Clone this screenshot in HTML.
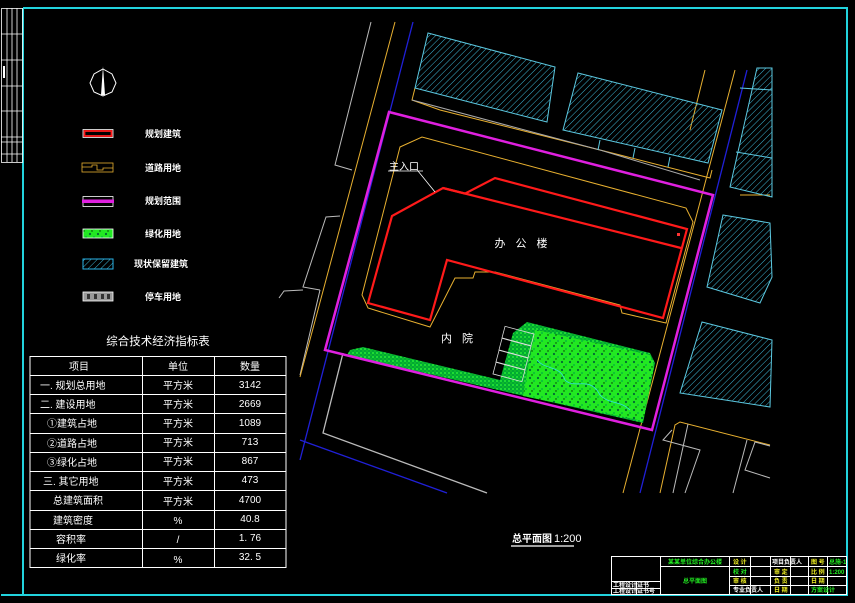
<!DOCTYPE html>
<html><head><meta charset="utf-8">
<style>
html,body{margin:0;padding:0;background:#000;}
svg{display:block;}
text{font-family:"Liberation Sans","Noto Sans CJK SC",sans-serif;}
</style></head>
<body>
<svg width="855" height="603" viewBox="0 0 855 603" xmlns="http://www.w3.org/2000/svg">
<defs>
<pattern id="hatch" width="4.5" height="4.5" patternUnits="userSpaceOnUse" patternTransform="rotate(45)">
<line x1="0" y1="0" x2="0" y2="4.5" stroke="#3cb4d2" stroke-width="1"/>
</pattern>
<pattern id="green" width="8" height="8" patternUnits="userSpaceOnUse">
<rect width="8" height="8" fill="#22e822"/>
<circle cx="2" cy="2" r="1.1" fill="#063"/>
<circle cx="6" cy="5" r="0.9" fill="#0a4"/>
<circle cx="4" cy="7" r="0.7" fill="#030"/>
</pattern>
<pattern id="green2" width="4" height="4" patternUnits="userSpaceOnUse">
<rect width="4" height="4" fill="#0a3"/>
<circle cx="1" cy="1" r="0.9" fill="#3f3"/>
<circle cx="3" cy="3" r="0.7" fill="#2c2"/>
</pattern>
</defs>
<rect width="855" height="603" fill="#000"/>

<polyline points="23,8 847,8 847,595 1,595" fill="none" stroke="#22d3dd" stroke-width="2"/>
<line x1="23" y1="8" x2="23" y2="595" stroke="#22d3dd" stroke-width="2"/>
<g stroke="#fff" stroke-width="0.8" fill="none">
<rect x="1.5" y="8.5" width="21" height="154"/>
<line x1="7" y1="8" x2="7" y2="162"/><line x1="12" y1="8" x2="12" y2="162"/><line x1="17" y1="8" x2="17" y2="162"/>
<line x1="1" y1="34" x2="22" y2="34"/><line x1="1" y1="60" x2="22" y2="60"/><line x1="1" y1="86" x2="22" y2="86"/>
<line x1="1" y1="111" x2="22" y2="111"/><line x1="1" y1="137" x2="22" y2="137"/><line x1="1" y1="142" x2="22" y2="142"/><line x1="1" y1="154" x2="22" y2="154"/>
</g>
<rect x="3" y="66" width="2" height="12" fill="#fff"/>

<polygon points="103,69 112,74 116,83 112,92 103,96 94,92 90,83 94,74" fill="none" stroke="#fff" stroke-width="1"/>
<polygon points="103,66 105,95 101,95" fill="#fff"/>

<rect x="83" y="129.5" width="30" height="8" fill="none" stroke="#fff" stroke-width="0.8"/>
<rect x="84.5" y="131" width="27" height="5" fill="#000" stroke="#ff1a1a" stroke-width="1.8"/>
<text x="145" y="137" fill="#fff" font-size="9" font-weight="bold">规划建筑</text>

<rect x="82" y="163" width="31" height="9" fill="none" stroke="#e8b030" stroke-width="0.8"/>
<path d="M82,167 H92 V165 H97 V170 H103 V168 H113" fill="none" stroke="#e8b030" stroke-width="0.8"/>
<text x="145" y="171" fill="#fff" font-size="9" font-weight="bold">道路用地</text>

<rect x="83" y="196.5" width="30" height="10" fill="none" stroke="#fff" stroke-width="0.8"/>
<rect x="82" y="199.5" width="32" height="3.5" fill="#e020e0"/>
<text x="145" y="204" fill="#fff" font-size="9" font-weight="bold">规划范围</text>

<rect x="83" y="229" width="30" height="9" fill="url(#green)" stroke="#fff" stroke-width="0.8"/>
<text x="145" y="237" fill="#fff" font-size="9" font-weight="bold">绿化用地</text>

<rect x="83" y="259" width="30" height="10" fill="url(#hatch)" stroke="#2ab4e8" stroke-width="1"/>
<text x="134" y="267" fill="#fff" font-size="9" font-weight="bold">现状保留建筑</text>

<rect x="83" y="292" width="30" height="9" fill="#999" stroke="#fff" stroke-width="0.8"/>
<g fill="#333"><rect x="87" y="294" width="3" height="5"/><rect x="94" y="294" width="3" height="5"/><rect x="101" y="294" width="3" height="5"/><rect x="107" y="294" width="3" height="5"/></g>
<text x="145" y="300" fill="#fff" font-size="9" font-weight="bold">停车用地</text>

<text x="158" y="345" fill="#fff" font-size="11.5" text-anchor="middle">综合技术经济指标表</text>
<g stroke="#fff" stroke-width="1" fill="none">
<rect x="30" y="356.5" width="256" height="211"/>
<line x1="142.5" y1="356" x2="142.5" y2="567"/>
<line x1="214.5" y1="356" x2="214.5" y2="567"/>
<line x1="30" y1="375.5" x2="286" y2="375.5"/>
<line x1="30" y1="394.5" x2="286" y2="394.5"/>
<line x1="30" y1="413.5" x2="286" y2="413.5"/>
<line x1="30" y1="433.5" x2="286" y2="433.5"/>
<line x1="30" y1="452.5" x2="286" y2="452.5"/>
<line x1="30" y1="471.5" x2="286" y2="471.5"/>
<line x1="30" y1="490.5" x2="286" y2="490.5"/>
<line x1="30" y1="510.5" x2="286" y2="510.5"/>
<line x1="30" y1="529.5" x2="286" y2="529.5"/>
<line x1="30" y1="548.5" x2="286" y2="548.5"/>
</g>
<g fill="#fff" font-size="10">
<text x="79" y="370" text-anchor="middle">项目</text><text x="178" y="370" text-anchor="middle">单位</text><text x="250" y="370" text-anchor="middle">数量</text>
<text x="40" y="389">一. 规划总用地</text><text x="178" y="389" text-anchor="middle">平方米</text><text x="250" y="388" text-anchor="middle">3142</text>
<text x="40" y="408">二. 建设用地</text><text x="178" y="408" text-anchor="middle">平方米</text><text x="250" y="407" text-anchor="middle">2669</text>
<text x="47" y="427">①建筑占地</text><text x="178" y="427" text-anchor="middle">平方米</text><text x="250" y="426" text-anchor="middle">1089</text>
<text x="47" y="447">②道路占地</text><text x="178" y="446" text-anchor="middle">平方米</text><text x="250" y="445" text-anchor="middle">713</text>
<text x="47" y="466">③绿化占地</text><text x="178" y="465" text-anchor="middle">平方米</text><text x="250" y="464" text-anchor="middle">867</text>
<text x="43" y="485">三. 其它用地</text><text x="178" y="485" text-anchor="middle">平方米</text><text x="250" y="483" text-anchor="middle">473</text>
<text x="53" y="504">总建筑面积</text><text x="178" y="505" text-anchor="middle">平方米</text><text x="250" y="503" text-anchor="middle">4700</text>
<text x="53" y="524">建筑密度</text><text x="178" y="524" text-anchor="middle">%</text><text x="250" y="522" text-anchor="middle">40.8</text>
<text x="56" y="543">容积率</text><text x="178" y="543" text-anchor="middle">/</text><text x="250" y="541" text-anchor="middle">1. 76</text>
<text x="56" y="562">绿化率</text><text x="178" y="563" text-anchor="middle">%</text><text x="250" y="560" text-anchor="middle">32. 5</text>
</g>

<g fill="none" stroke-width="1">
<polyline points="371,22 335,165 352,170" stroke="#bbb"/>
<polyline points="340,216 326,217 303,287 320,290" stroke="#bbb"/>
<polyline points="303,290 284,291 279,298" stroke="#bbb"/>
<polyline points="320,290 300,375" stroke="#bbb"/>
<polyline points="343,353 323,433 487,493" stroke="#bbb" stroke-width="1.3"/>
<line x1="395" y1="22" x2="300" y2="377" stroke="#e8b030"/>
<line x1="735" y1="70" x2="623" y2="493" stroke="#e8b030"/>
<line x1="705" y1="70" x2="690" y2="130" stroke="#e8b030"/>
<polyline points="660,493 675,425 680,422 770,445" stroke="#e8b030"/>
<polyline points="740,195 770,195" stroke="#e8b030"/>
<line x1="413" y1="22" x2="300" y2="460" stroke="#2020d8" stroke-width="1.3"/>
<line x1="300" y1="440" x2="447" y2="493" stroke="#2020d8" stroke-width="1.3"/>
<line x1="747" y1="70" x2="640" y2="493" stroke="#2020d8" stroke-width="1.3"/>
<polyline points="688,424 673,493" stroke="#bbb"/>
<polyline points="672,430 663,440 700,450 685,493" stroke="#bbb"/>
<polyline points="747,440 733,493" stroke="#bbb"/>
<polyline points="770,446 755,442 745,470 770,478" stroke="#bbb"/>
<polyline points="415,88 412,100 440,110 620,155 710,178 712,170" stroke="#e8b030"/>
<polyline points="412,100 600,150 700,180" stroke="#aaa"/>
</g>

<g fill="url(#hatch)" stroke="#5cc8e0" stroke-width="1">
<polygon points="428,33 555,67 547,122 415,88"/>
<polygon points="578,73 722,110 708,163 563,130"/>
<polygon points="757,68 772,68 772,197 730,187"/>
<polygon points="723,215 770,223 772,277 760,303 707,287"/>
<polygon points="702,322 772,340 770,407 680,393"/>
</g>
<g stroke="#5cc8e0" stroke-width="1" fill="none">
<line x1="740" y1="88" x2="772" y2="90"/><line x1="736" y1="152" x2="772" y2="158"/>
<line x1="600" y1="140" x2="598" y2="150"/><line x1="635" y1="148" x2="633" y2="158"/><line x1="670" y1="157" x2="668" y2="167"/>
</g>

<path d="M400,147 L422,137 L686,208 L693,222 L666,323 L622,313 L620,305 L495,272 L475,272 L473,278 L455,278 L430,327 L368,308 L362,295 Z" fill="none" stroke="#e8b030" stroke-width="1"/>

<polygon points="350,350 363,347 500,380 513,333 527,322 650,353 655,363 643,423 520,395 347,355" fill="url(#green2)"/>
<polygon points="527,328 650,355 654,365 643,421 523,396 535,330" fill="url(#green)"/>
<g fill="none" stroke="#ddd" stroke-width="0.8">
<rect x="503" y="330" width="30" height="12" transform="rotate(15 518 336)"/>
<rect x="500" y="342" width="30" height="12" transform="rotate(15 515 348)"/>
<rect x="497" y="354" width="30" height="12" transform="rotate(15 512 360)"/>
<rect x="494" y="366" width="30" height="12" transform="rotate(15 509 372)"/>
</g>
<path d="M537,360 C545,370 560,365 565,380 C575,390 590,375 600,395 C610,405 620,400 630,410" fill="none" stroke="#30e0e0" stroke-width="0.8"/>

<polygon points="389,112 713,195 652,430 325,350" fill="none" stroke="#e020e0" stroke-width="2.5"/>

<g fill="none" stroke="#ff1a1a" stroke-width="2.2" stroke-linejoin="miter">
<polygon points="368,303 392,216 443,188 465,193.6 495,178 687,229 663,318 447,260 430,320"/>
<line x1="443" y1="188" x2="681" y2="248"/>
</g>
<rect x="677" y="233" width="3" height="3" fill="#f33"/>

<text x="526" y="247" fill="#fff" font-size="11" text-anchor="middle" letter-spacing="10">办公楼</text>
<text x="462" y="342" fill="#fff" font-size="11" text-anchor="middle" letter-spacing="10">内院</text>
<text x="389" y="170" fill="#fff" font-size="10">主入口</text>
<line x1="388" y1="171" x2="423" y2="171" stroke="#fff" stroke-width="0.8"/>
<line x1="418" y1="171" x2="435" y2="192" stroke="#fff" stroke-width="0.8"/>

<text x="512" y="542" fill="#fff" font-size="10" font-weight="bold">总平面图</text><text x="554" y="542" fill="#fff" font-size="11">1:200</text>
<line x1="511" y1="546" x2="574" y2="546" stroke="#fff" stroke-width="1.2"/>

<g stroke="#fff" stroke-width="1" fill="none">
<rect x="611.5" y="556.5" width="235" height="38"/>
<line x1="660.5" y1="556" x2="660.5" y2="595"/>
<line x1="729.5" y1="556" x2="729.5" y2="595"/>
<line x1="750.5" y1="556" x2="750.5" y2="595"/>
<line x1="770.5" y1="556" x2="770.5" y2="595"/>
<line x1="790.5" y1="556" x2="790.5" y2="595"/>
<line x1="808.5" y1="556" x2="808.5" y2="595"/>
<line x1="827.5" y1="556" x2="827.5" y2="595"/>
<line x1="660" y1="566.5" x2="847" y2="566.5"/>
<line x1="729" y1="576.5" x2="847" y2="576.5"/>
<line x1="729" y1="585.5" x2="847" y2="585.5"/>
<line x1="611" y1="581.5" x2="660" y2="581.5"/>
<line x1="611" y1="588.5" x2="660" y2="588.5"/>
<line x1="636.5" y1="581" x2="636.5" y2="595"/>
</g>
<g font-size="6" font-weight="bold">
<text x="695" y="564" fill="#2e2" text-anchor="middle">某某单位综合办公楼</text>
<text x="695" y="583" fill="#2e2" text-anchor="middle">总平面图</text>
<text x="733" y="564" fill="#ee2">设 计</text><text x="733" y="574" fill="#2e2">校 对</text><text x="733" y="583" fill="#ee2">审 核</text><text x="733" y="592" fill="#fff">专业负责人</text>
<text x="772" y="564" fill="#fff">项目负责人</text><text x="774" y="574" fill="#ee2">审 定</text><text x="774" y="583" fill="#ee2">负 责</text><text x="774" y="592" fill="#ee2">日 期</text>
<text x="811" y="564" fill="#ee2">图 号</text><text x="811" y="574" fill="#ee2">比 例</text><text x="811" y="583" fill="#ee2">日 期</text><text x="811" y="592" fill="#2e2">方案设计</text>
<text x="829" y="564" fill="#2e2">总施-1</text><text x="829" y="574" fill="#2e2">1:200</text>
<text x="613" y="587" fill="#fff">工程设计证书</text><text x="613" y="593" fill="#fff">工程设计证书号</text>
</g>
</svg>
</body></html>
